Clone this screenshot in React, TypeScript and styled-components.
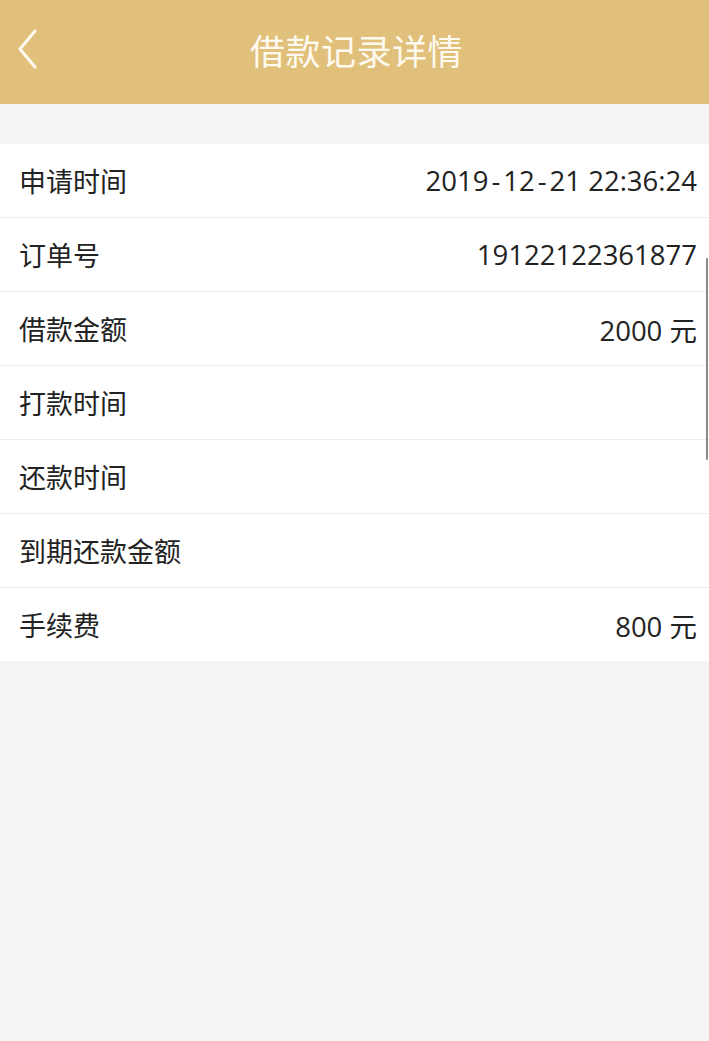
import React from 'react'
import styled, { createGlobalStyle } from 'styled-components'

const GlobalStyle = createGlobalStyle`
  html, body {
    margin: 0;
    padding: 0;
    background: #f4f4f4;
  }
  body {
    font-family: "Noto Sans CJK SC", "Noto Sans", sans-serif;
    color: #222;
  }
`

const Page = styled.div`
  position: relative;
  min-height: 1041px;
  background: #f4f4f4;
`

const NavBar = styled.header`
  position: relative;
  display: flex;
  align-items: center;
  justify-content: center;
  height: 104px;
  background: #e0c07b;
`

const BackButton = styled.button`
  position: absolute;
  left: 12px;
  top: 24px;
  display: flex;
  align-items: center;
  justify-content: center;
  width: 32px;
  height: 50px;
  padding: 0;
  border: 0;
  background: transparent;
  cursor: pointer;
`

const Title = styled.h1`
  margin: 0 0 6px;
  font-size: 35px;
  font-weight: 400;
  color: #fffaf0;
  letter-spacing: 0.5px;
  padding-left: 4px;
`

const List = styled.ul`
  list-style: none;
  margin: 40px 0 0;
  padding: 0;
  background: #fff;
`

const Row = styled.li`
  display: flex;
  align-items: center;
  justify-content: space-between;
  height: 73px;
  padding: 0 12px 0 19px;
  border-bottom: 1px solid #ededed;
  &:last-child {
    border-bottom: 0;
  }
`

const Label = styled.span`
  font-size: 27px;
  color: #222;
`

const Value = styled.span`
  font-family: "Open Sans", "Noto Sans CJK SC", sans-serif;
  font-size: 27.5px;
  color: #222;
`

// wide dash, as the reference font draws the date hyphens
const Dash = styled.span`
  display: inline-block;
  padding: 0 3px;
`

const ScrollIndicator = styled.div`
  position: absolute;
  right: 1px;
  top: 258px;
  width: 2px;
  height: 202px;
  border-radius: 2px;
  background: #8a8a8a;
`

const rows: { label: string; value?: string }[] = [
  { label: '申请时间', value: '2019-12-21 22:36:24' },
  { label: '订单号', value: '19122122361877' },
  { label: '借款金额', value: '2000 元' },
  { label: '打款时间' },
  { label: '还款时间' },
  { label: '到期还款金额' },
  { label: '手续费', value: '800 元' },
]

function renderValue(v: string) {
  const parts = v.split('-')
  return parts.map((p, i) => (
    <React.Fragment key={i}>
      {i > 0 && <Dash>-</Dash>}
      {p}
    </React.Fragment>
  ))
}

export default function App() {
  return (
    <Page>
      <GlobalStyle />
      <NavBar>
        <BackButton aria-label="返回">
          <svg width="22" height="40" viewBox="0 0 22 40" fill="none">
            <path d="M18 2 L3 20 L18 38" stroke="#fffaf0" strokeWidth="3" strokeLinecap="round" strokeLinejoin="round" />
          </svg>
        </BackButton>
        <Title>借款记录详情</Title>
      </NavBar>
      <List>
        {rows.map((r) => (
          <Row key={r.label}>
            <Label>{r.label}</Label>
            {r.value && <Value>{renderValue(r.value)}</Value>}
          </Row>
        ))}
      </List>
      <ScrollIndicator />
    </Page>
  )
}
